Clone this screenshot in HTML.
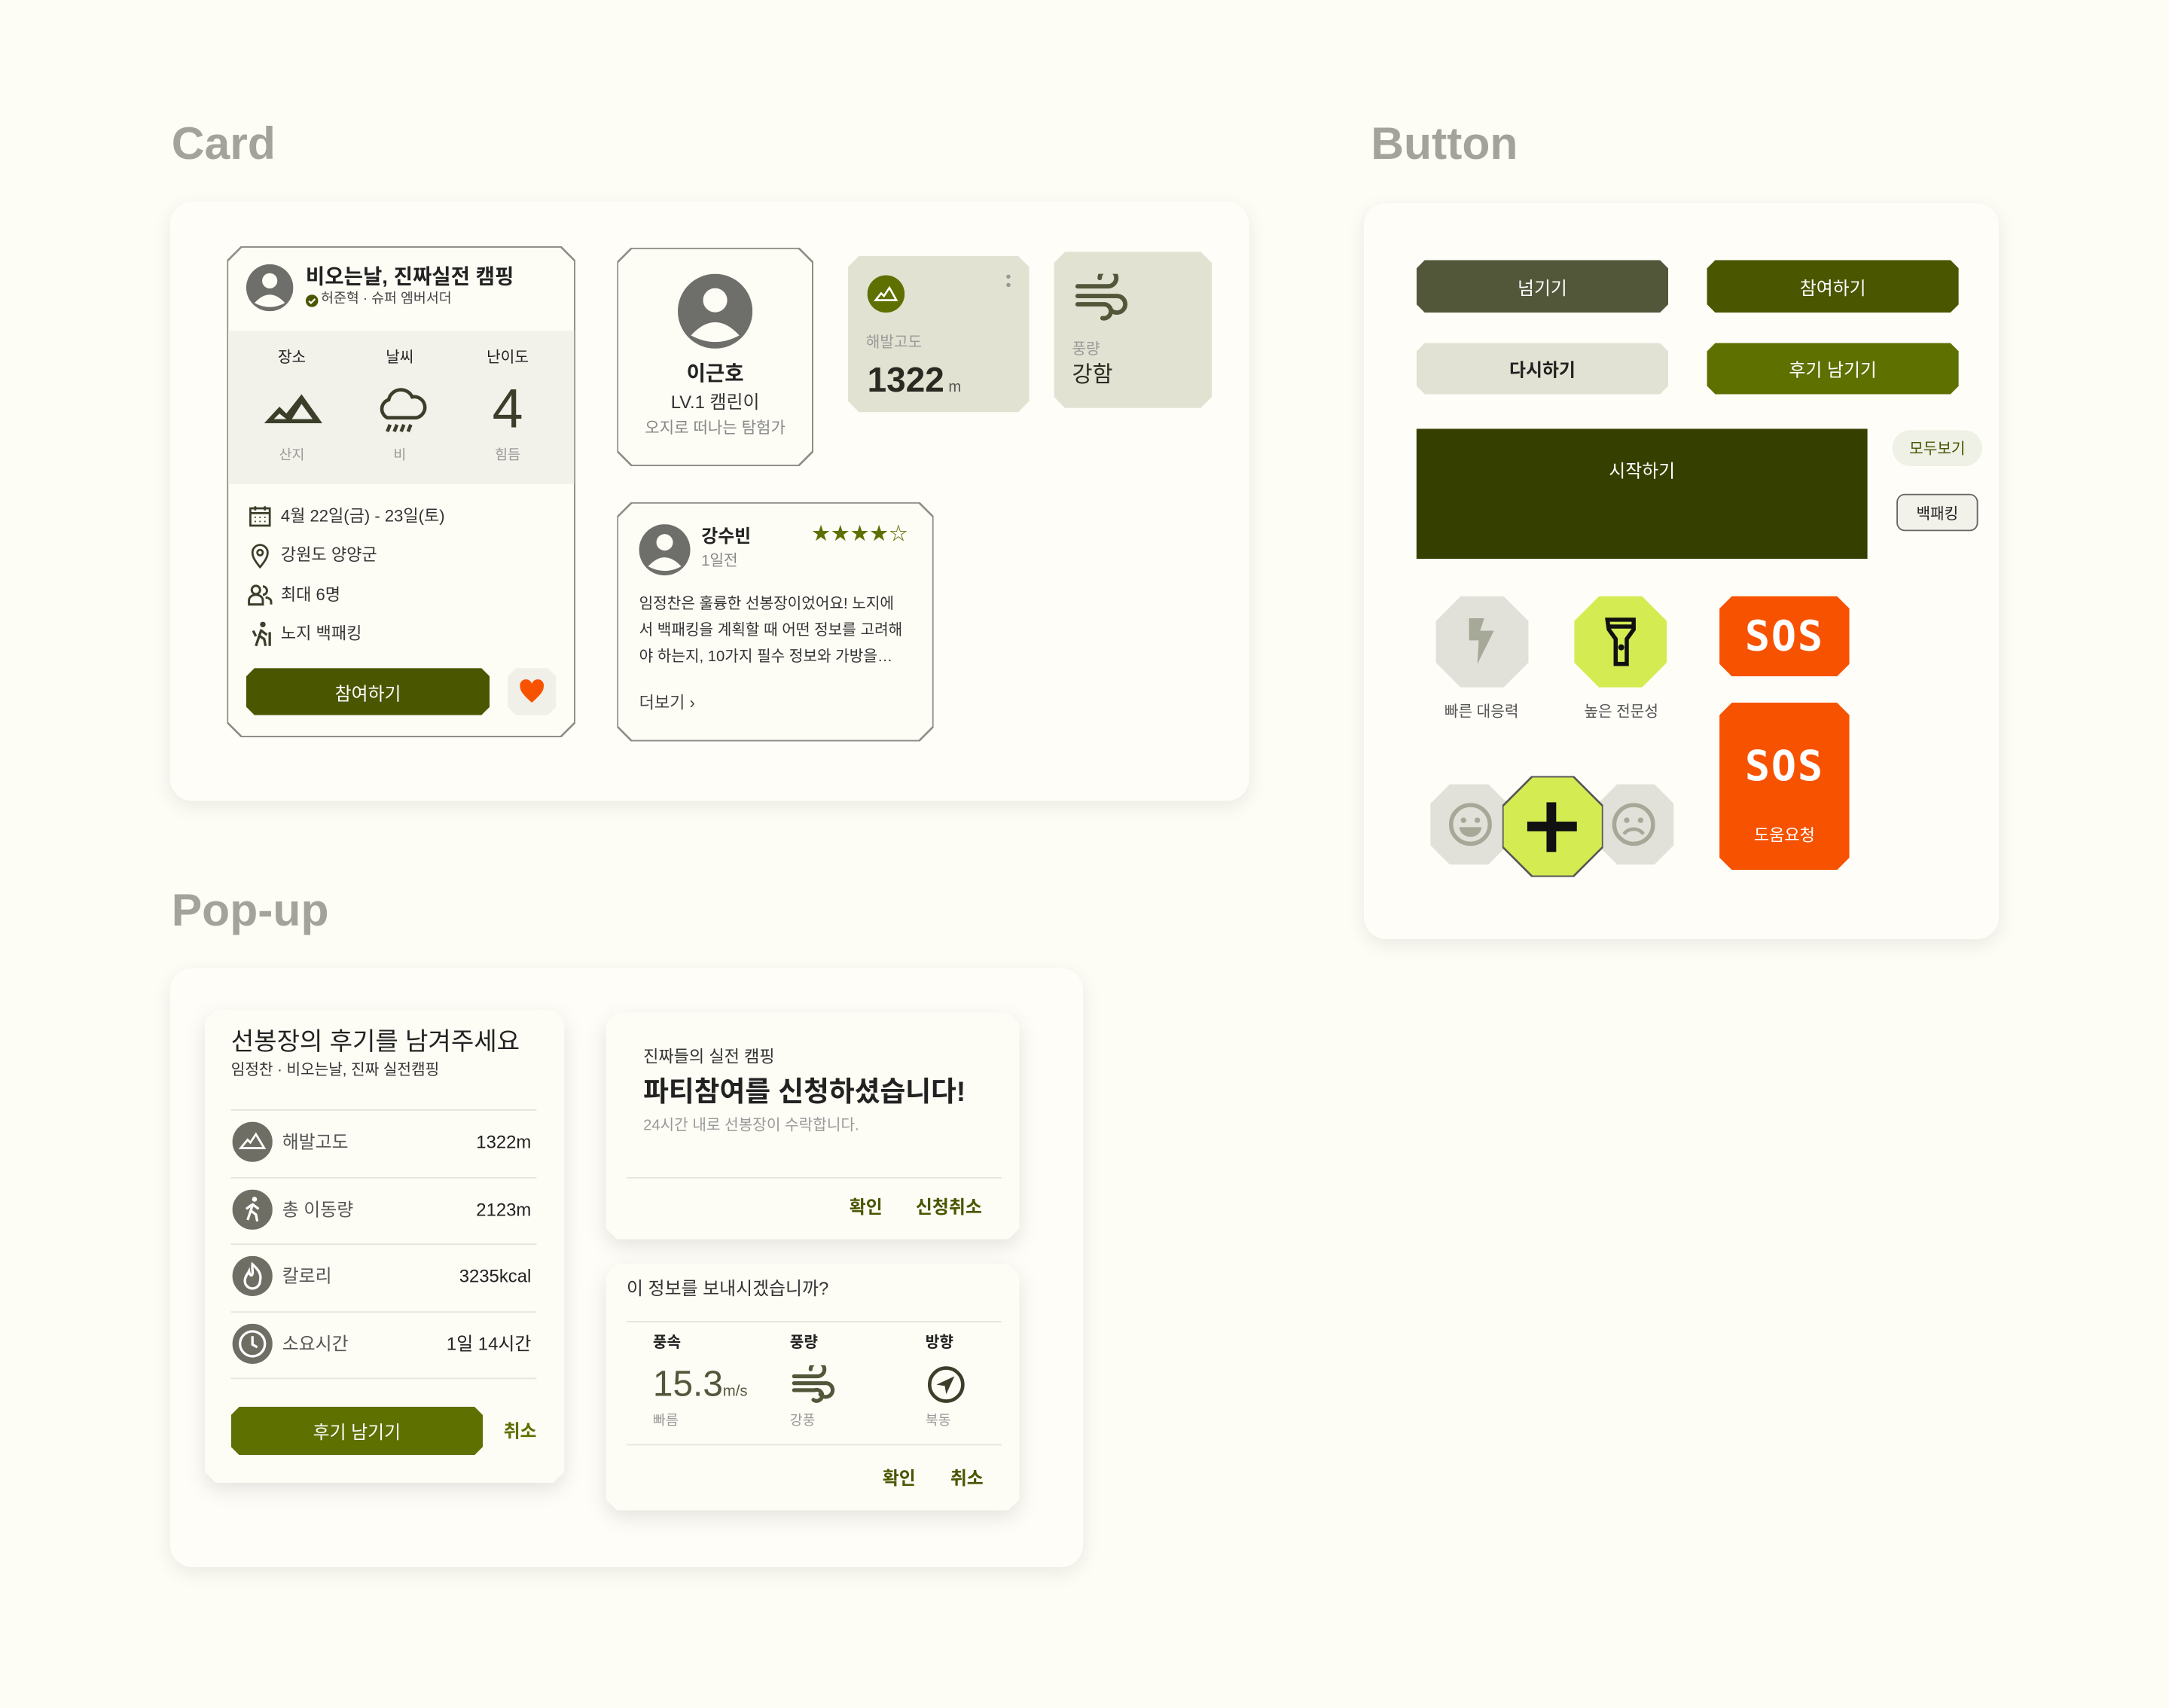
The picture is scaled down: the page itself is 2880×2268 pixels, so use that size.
<!DOCTYPE html>
<html><head><meta charset="utf-8"><style>
*{margin:0;padding:0;box-sizing:border-box}
html,body{width:2880px;height:2268px;background:#fdfcf5;overflow:hidden}
#w{position:absolute;left:0;top:0;width:1568px;height:1235px;transform:scale(1.83673);transform-origin:0 0;font-family:"Liberation Sans","Noto Sans CJK KR",sans-serif;color:#222}
.a{position:absolute}
.t{position:absolute;line-height:1;white-space:nowrap}
.o{position:absolute;--c:10px;clip-path:polygon(var(--c) 0,calc(100% - var(--c)) 0,100% var(--c),100% calc(100% - var(--c)),calc(100% - var(--c)) 100%,var(--c) 100%,0 calc(100% - var(--c)),0 var(--c))}
.o>.in{position:absolute;inset:1px;--c:10px;clip-path:inherit;background:#fdfcf5}
.panel{position:absolute;background:#fefdf8;border-radius:16px;box-shadow:0 4px 14px rgba(0,0,0,.08)}
.h{font-size:33px;font-weight:bold;color:#a3a39c}
.btn{display:flex;align-items:center;justify-content:center;color:#fff;font-size:13px}
.c{transform:translateX(-50%)}
.g{color:#4a5600;font-weight:bold}
.sh{position:absolute;left:0;top:0;filter:drop-shadow(0 5px 7px rgba(0,0,0,.1))}
</style></head><body><div id="w">
<div class="t h" style="left:124px;top:87px">Card</div>
<div class="t h" style="left:991px;top:87px">Button</div>
<div class="t h" style="left:124px;top:641px">Pop-up</div>

<div class="panel" style="left:123px;top:146px;width:780px;height:433px"></div>
<div class="panel" style="left:986px;top:147px;width:459px;height:532px"></div>
<div class="panel" style="left:123px;top:700px;width:660px;height:433px"></div>

<!-- Card 1 -->
<div class="o" style="left:164px;top:178px;width:252px;height:355px;background:#8d8d88"><div class="in"></div></div>
<div class="a" style="left:165px;top:239px;width:250px;height:111px;background:#f2f1ea"></div>
<svg class="a" style="left:178px;top:191px" width="34" height="34" viewBox="0 0 34 34"><circle cx="17" cy="17" r="17" fill="#6e6e6a"/><circle cx="17" cy="12" r="5.5" fill="#fdfcf5"/><path d="M6 28 Q17 16 28 28 Q17 34 6 28Z" fill="#fdfcf5"/></svg>
<div class="t" style="left:221px;top:193px;font-size:15px;font-weight:bold">비오는날, 진짜실전 캠핑</div>
<svg class="a" style="left:221px;top:213px" width="9" height="9"><circle cx="4.5" cy="4.5" r="4.5" fill="#4a5600"/><path d="M2.3 4.6l1.5 1.5 3-3" stroke="#fff" fill="none" stroke-width="1.2"/></svg>
<div class="t" style="left:232px;top:212px;font-size:10px;color:#444">허준혁 · 슈퍼 엠버서더</div>
<div class="t c" style="left:211px;top:254px;font-size:11px">장소</div>
<div class="t c" style="left:289px;top:254px;font-size:11px">날씨</div>
<div class="t c" style="left:367px;top:254px;font-size:11px">난이도</div>
<svg class="a" style="left:189px;top:282px" width="46" height="26"><path d="M2 24 L13 12 L18 17 L29 3 L44 24Z M9 21 L13 17 L18 21Z M22 21 L29 10 L37 21Z" fill="#3b3f2a" fill-rule="evenodd"/></svg>
<svg class="a" style="left:271px;top:278px" width="38" height="38" viewBox="0 0 38 38"><path d="M9 24 A7 7 0 0 1 10 11 A9 9 0 0 1 27 9 A7 7 0 0 1 30 24Z" fill="none" stroke="#3b3f2a" stroke-width="2.5"/><path d="M11 29 l-2 5 M16 29 l-2 5 M21 29 l-2 5 M26 29 l-2 5" stroke="#3b3f2a" stroke-width="2.5"/></svg>
<div class="t c" style="left:367px;top:276px;font-size:40px;color:#3b3f2a">4</div>
<div class="t c" style="left:211px;top:325px;font-size:10px;color:#999">산지</div>
<div class="t c" style="left:289px;top:325px;font-size:10px;color:#999">비</div>
<div class="t c" style="left:367px;top:325px;font-size:10px;color:#999">힘듬</div>
<svg class="a" style="left:180px;top:365px" width="16" height="16"><rect x="1" y="2.5" width="14" height="12.5" fill="none" stroke="#3b3f2a" stroke-width="1.5"/><path d="M1 6h14M4.5 1v3M11.5 1v3" stroke="#3b3f2a" stroke-width="1.5"/><path d="M4 9h1M7.5 9h1M11 9h1M4 12h1M7.5 12h1M11 12h1" stroke="#3b3f2a"/></svg>
<div class="t" style="left:203px;top:367px;font-size:12px;color:#333">4월 22일(금) - 23일(토)</div>
<svg class="a" style="left:181px;top:393px" width="14" height="18"><path d="M7 17 C2 11 1.5 8.5 1.5 6.5 A5.5 5.5 0 0 1 12.5 6.5 C12.5 8.5 12 11 7 17Z" fill="none" stroke="#3b3f2a" stroke-width="1.5"/><circle cx="7" cy="6.5" r="2" fill="none" stroke="#3b3f2a" stroke-width="1.5"/></svg>
<div class="t" style="left:203px;top:395px;font-size:12px;color:#333">강원도 양양군</div>
<svg class="a" style="left:179px;top:422px" width="18" height="16"><circle cx="6" cy="4.5" r="3" fill="none" stroke="#3b3f2a" stroke-width="1.6"/><path d="M1 15 V12 A5 4 0 0 1 11 12 V15Z" fill="none" stroke="#3b3f2a" stroke-width="1.6"/><path d="M11 2 A3 3 0 0 1 11 8 M13 10 A4 3 0 0 1 17 13 V15" fill="none" stroke="#3b3f2a" stroke-width="1.6"/></svg>
<div class="t" style="left:203px;top:424px;font-size:12px;color:#333">최대 6명</div>
<svg class="a" style="left:181px;top:449px" width="16" height="19"><circle cx="9" cy="2.5" r="2" fill="#3b3f2a"/><path d="M8 6 L6 12 L4 18 M7 11 L10 13 L11 18 M8 7 L12 10 M14 8 V18 M2 7 L4 11" stroke="#3b3f2a" stroke-width="1.8" fill="none"/></svg>
<div class="t" style="left:203px;top:452px;font-size:12px;color:#333">노지 백패킹</div>
<div class="o btn" style="left:178px;top:483px;width:176px;height:34px;background:#4a5600;--c:6px">참여하기</div>
<div class="o" style="left:367px;top:483px;width:35px;height:34px;background:#f0efe8;--c:6px"></div>
<svg class="a" style="left:375px;top:491px" width="19" height="18"><path d="M9.5 17 C4 12 1 9 1 5.5 A4.3 4.3 0 0 1 9.5 3.5 A4.3 4.3 0 0 1 18 5.5 C18 9 15 12 9.5 17Z" fill="#f75200"/></svg>

<!-- Card 2 -->
<div class="o" style="left:446px;top:179px;width:142px;height:158px;background:#8d8d88"><div class="in"></div></div>
<svg class="a" style="left:490px;top:198px" width="54" height="54" viewBox="0 0 34 34"><circle cx="17" cy="17" r="17" fill="#6e6e6a"/><circle cx="17" cy="12" r="5.5" fill="#fdfcf5"/><path d="M6 28 Q17 16 28 28 Q17 34 6 28Z" fill="#fdfcf5"/></svg>
<div class="t c" style="left:517px;top:263px;font-size:15px;font-weight:bold">이근호</div>
<div class="t c" style="left:517px;top:284px;font-size:13px;color:#333">LV.1 캠린이</div>
<div class="t c" style="left:517px;top:305px;font-size:11.5px;color:#888">오지로 떠나는 탐험가</div>

<!-- Card 3 -->
<div class="o" style="left:613px;top:185px;width:131px;height:113px;background:#e2e2d2;--c:8px"></div>
<svg class="a" style="left:627px;top:199px" width="27" height="27"><circle cx="13.5" cy="13.5" r="13.5" fill="#5e7000"/><path d="M6 18 L10 13 L12 15 L16 9 L21 18Z" fill="none" stroke="#fff" stroke-width="1.4"/></svg>
<svg class="a" style="left:727px;top:197px" width="4" height="12"><circle cx="2" cy="3" r="1.5" fill="#999"/><circle cx="2" cy="9" r="1.5" fill="#999"/></svg>
<div class="t" style="left:626px;top:243px;font-size:11px;color:#999">해발고도</div>
<div class="t" style="left:627px;top:263px;font-size:25px;font-weight:bold;color:#2a2a22">1322<span style="font-size:11px;font-weight:normal;color:#555"> m</span></div>

<!-- Card 4 -->
<div class="o" style="left:762px;top:182px;width:114px;height:113px;background:#e2e2d2;--c:8px"></div>
<svg class="a" style="left:777px;top:198px" width="40" height="36"><path d="M2 9 H24 A6 6 0 1 0 18 3 M2 16 H30 A6 6 0 1 1 26 26 M2 22 H22 A5 5 0 1 1 20 32" fill="none" stroke="#52573a" stroke-width="3.2" stroke-linecap="round"/></svg>
<div class="t" style="left:775px;top:248px;font-size:11px;color:#999">풍량</div>
<div class="t" style="left:775px;top:264px;font-size:16px;color:#2a2a22">강함</div>

<!-- Card 5 -->
<div class="o" style="left:446px;top:363px;width:229px;height:173px;background:#8d8d88"><div class="in"></div></div>
<svg class="a" style="left:462px;top:379px" width="37" height="37" viewBox="0 0 34 34"><circle cx="17" cy="17" r="17" fill="#6e6e6a"/><circle cx="17" cy="12" r="5.5" fill="#fdfcf5"/><path d="M6 28 Q17 16 28 28 Q17 34 6 28Z" fill="#fdfcf5"/></svg>
<div class="t" style="left:507px;top:381px;font-size:13px;font-weight:bold">강수빈</div>
<div class="t" style="left:507px;top:401px;font-size:11px;color:#888">1일전</div>
<div class="t" style="left:587px;top:379px;font-size:13px;color:#5e7000;letter-spacing:1px">★★★★☆</div>
<div class="a" style="left:462px;top:428px;width:205px;font-size:11px;line-height:19px;color:#333">임정찬은 훌륭한 선봉장이었어요! 노지에<br>서 백패킹을 계획할 때 어떤 정보를 고려해<br>야 하는지, 10가지 필수 정보와 가방을…</div>
<div class="t" style="left:462px;top:502px;font-size:12px;color:#444">더보기 ›</div>

<!-- Buttons -->
<div class="o btn" style="left:1024px;top:188px;width:182px;height:38px;background:#52573a;--c:6px">넘기기</div>
<div class="o btn" style="left:1234px;top:188px;width:182px;height:38px;background:#4a5600;--c:6px">참여하기</div>
<div class="o btn" style="left:1024px;top:248px;width:182px;height:37px;background:#e2e2d4;color:#222;font-weight:bold;--c:6px">다시하기</div>
<div class="o btn" style="left:1234px;top:248px;width:182px;height:37px;background:#5e7000;--c:6px">후기 남기기</div>
<div class="a" style="left:1024px;top:310px;width:326px;height:94px;background:#354000"></div>
<div class="t c" style="left:1187px;top:334px;font-size:13px;color:#fff">시작하기</div>
<div class="a btn" style="left:1368px;top:311px;width:65px;height:26px;border-radius:13px;background:#eff0e6;color:#4a5600;font-size:11px">모두보기</div>
<div class="a btn" style="left:1371px;top:357px;width:59px;height:27px;border-radius:6px;background:#f2f1ea;border:1px solid #666;color:#222;font-size:11px">백패킹</div>
<div class="o" style="left:1038px;top:431px;width:67px;height:66px;background:#e2e1d9;--c:18px"></div>
<svg class="a" style="left:1061px;top:447px" width="20" height="34"><path d="M1 0 H12 L9 9 H19 L7 33 L8 16 H1Z" fill="#a6a898"/></svg>
<div class="o" style="left:1138px;top:431px;width:67px;height:66px;background:#d4ec52;--c:18px"></div>
<svg class="a" style="left:1160px;top:446px" width="24" height="36"><path d="M2 2 H21 V9 L16 16 V34 H8 V16 L3 9Z M3 7 H20" fill="none" stroke="#111" stroke-width="3"/><circle cx="12" cy="22" r="2.2" fill="#111"/></svg>
<div class="t c" style="left:1071px;top:510px;font-size:11px;color:#555">빠른 대응력</div>
<div class="t c" style="left:1172px;top:510px;font-size:11px;color:#555">높은 전문성</div>
<div class="o btn" style="left:1243px;top:431px;width:94px;height:58px;background:#f75200;--c:9px;font-size:30px;font-weight:bold;font-family:'DejaVu Sans Mono',monospace;letter-spacing:1px">SOS</div>
<div class="o" style="left:1243px;top:508px;width:94px;height:121px;background:#f75200;--c:9px"></div>
<div class="t c" style="left:1290px;top:540px;font-size:30px;font-weight:bold;color:#fff;font-family:'DejaVu Sans Mono',monospace;letter-spacing:1px">SOS</div>
<div class="t c" style="left:1290px;top:598px;font-size:12px;color:#fff">도움요청</div>
<div class="o" style="left:1034px;top:567px;width:56px;height:58px;background:#e2e1d9;--c:14px"></div>
<div class="o" style="left:1155px;top:567px;width:55px;height:58px;background:#e2e1d9;--c:14px"></div>
<svg class="a" style="left:1047px;top:580px" width="32" height="32"><circle cx="16" cy="16" r="14" fill="none" stroke="#a6a898" stroke-width="3"/><circle cx="11" cy="13" r="2" fill="#a6a898"/><circle cx="21" cy="13" r="2" fill="#a6a898"/><path d="M8 18 H24 A8 7 0 0 1 8 18Z" fill="#a6a898"/></svg>
<svg class="a" style="left:1165px;top:580px" width="32" height="32"><circle cx="16" cy="16" r="14" fill="none" stroke="#a6a898" stroke-width="3"/><circle cx="11" cy="13" r="2" fill="#a6a898"/><circle cx="21" cy="13" r="2" fill="#a6a898"/><path d="M9 23 A8 7 0 0 1 23 23" fill="none" stroke="#a6a898" stroke-width="2.5"/></svg>
<div class="o" style="left:1086px;top:561px;width:73px;height:73px;background:#555;--c:21px"><div class="in" style="--c:21px;background:#d4ec52"></div></div>
<svg class="a" style="left:1104px;top:580px" width="36" height="36"><path d="M14 0h7v36h-7z M0 14h36v7H0z" fill="#111"/></svg>

<!-- Popup shadows -->
<div class="sh">
<div class="o" style="left:148px;top:730px;width:260px;height:342px;background:#fdfcf5;--c:8px"></div>
<div class="o" style="left:438px;top:732px;width:299px;height:164px;background:#fdfcf5;--c:8px"></div>
<div class="o" style="left:438px;top:914px;width:299px;height:178px;background:#fdfcf5;--c:8px"></div>
</div>

<!-- Popup 1 -->
<div class="t" style="left:167px;top:744px;font-size:18px">선봉장의 후기를 남겨주세요</div>
<div class="t" style="left:167px;top:769px;font-size:11px;color:#333">임정찬 · 비오는날, 진짜 실전캠핑</div>
<div class="a" style="left:167px;top:802px;width:221px;border-top:1px solid #e6e5dd"></div>
<div class="a" style="left:167px;top:851px;width:221px;border-top:1px solid #e6e5dd"></div>
<div class="a" style="left:167px;top:899px;width:221px;border-top:1px solid #e6e5dd"></div>
<div class="a" style="left:167px;top:948px;width:221px;border-top:1px solid #e6e5dd"></div>
<div class="a" style="left:167px;top:996px;width:221px;border-top:1px solid #e6e5dd"></div>
<svg class="a" style="left:168px;top:811px" width="29" height="29"><circle cx="14.5" cy="14.5" r="14.5" fill="#6e6e64"/><path d="M6 19 L11 13 L13 15 L17 9 L23 19Z" fill="none" stroke="#fff" stroke-width="1.5"/></svg>
<svg class="a" style="left:168px;top:860px" width="29" height="29"><circle cx="14.5" cy="14.5" r="14.5" fill="#6e6e64"/><circle cx="16" cy="7" r="1.8" fill="#fff"/><path d="M15 10 L13 16 L11 22 M13 15 L17 18 L18 23 M15 11 L19 14 M14 11 L10 14" stroke="#fff" stroke-width="1.8" fill="none"/></svg>
<svg class="a" style="left:168px;top:908px" width="29" height="29"><circle cx="14.5" cy="14.5" r="14.5" fill="#6e6e64"/><path d="M14.5 6 C20 11 21 14 20 18 A5.5 5.5 0 0 1 9 18 C9 15 11 13 12 11 C12.5 14 14 15 14.5 13 C15 11 14 9 14.5 6Z" fill="none" stroke="#fff" stroke-width="1.8"/></svg>
<svg class="a" style="left:168px;top:957px" width="29" height="29"><circle cx="14.5" cy="14.5" r="14.5" fill="#6e6e64"/><circle cx="14.5" cy="14.5" r="9" fill="none" stroke="#fff" stroke-width="1.8"/><path d="M14.5 9 V15 L18 17" fill="none" stroke="#fff" stroke-width="1.8"/></svg>
<div class="t" style="left:204px;top:819px;font-size:13px;color:#555">해발고도</div>
<div class="t" style="left:204px;top:868px;font-size:13px;color:#555">총 이동량</div>
<div class="t" style="left:204px;top:916px;font-size:13px;color:#555">칼로리</div>
<div class="t" style="left:204px;top:965px;font-size:13px;color:#555">소요시간</div>
<div class="t" style="right:1184px;top:819px;font-size:13px">1322m</div>
<div class="t" style="right:1184px;top:868px;font-size:13px">2123m</div>
<div class="t" style="right:1184px;top:916px;font-size:13px">3235kcal</div>
<div class="t" style="right:1184px;top:965px;font-size:13px">1일 14시간</div>
<div class="o btn" style="left:167px;top:1017px;width:182px;height:35px;background:#5e7000;--c:6px">후기 남기기</div>
<div class="t g" style="left:364px;top:1028px;font-size:13px;color:#5e7000">취소</div>

<!-- Popup 2 -->
<div class="t" style="left:465px;top:758px;font-size:12px;color:#333">진짜들의 실전 캠핑</div>
<div class="t" style="left:465px;top:780px;font-size:20px;font-weight:bold">파티참여를 신청하셨습니다!</div>
<div class="t" style="left:465px;top:809px;font-size:11px;color:#999">24시간 내로 선봉장이 수락합니다.</div>
<div class="a" style="left:453px;top:851px;width:271px;border-top:1px solid #e6e5dd"></div>
<div class="t g" style="left:614px;top:866px;font-size:13px">확인</div>
<div class="t g" style="left:662px;top:866px;font-size:13px">신청취소</div>

<!-- Popup 3 -->
<div class="t" style="left:453px;top:925px;font-size:13px;color:#333">이 정보를 보내시겠습니까?</div>
<div class="a" style="left:453px;top:955px;width:271px;border-top:1px solid #e6e5dd"></div>
<div class="a" style="left:453px;top:1044px;width:271px;border-top:1px solid #e6e5dd"></div>
<div class="t" style="left:472px;top:966px;font-size:11px;font-weight:bold">풍속</div>
<div class="t" style="left:571px;top:966px;font-size:11px;font-weight:bold">풍량</div>
<div class="t" style="left:669px;top:966px;font-size:11px;font-weight:bold">방향</div>
<div class="t" style="left:472px;top:987px;font-size:26px;color:#52573a">15.3<span style="font-size:11px">m/s</span></div>
<svg class="a" style="left:572px;top:987px" width="32" height="28"><path d="M2 8 H19 A5 5 0 1 0 14 3 M2 13 H24 A5 5 0 1 1 21 21 M2 18 H17 A4 4 0 1 1 16 25" fill="none" stroke="#52573a" stroke-width="2.8" stroke-linecap="round"/></svg>
<svg class="a" style="left:670px;top:987px" width="28" height="28"><circle cx="14" cy="14" r="12" fill="none" stroke="#3b3f2a" stroke-width="2.5"/><path d="M20 8 L14 21 L13 15 L7 14Z" fill="#3b3f2a"/></svg>
<div class="t" style="left:472px;top:1023px;font-size:10px;color:#999">빠름</div>
<div class="t" style="left:571px;top:1023px;font-size:10px;color:#999">강풍</div>
<div class="t" style="left:669px;top:1023px;font-size:10px;color:#999">북동</div>
<div class="t g" style="left:638px;top:1062px;font-size:13px">확인</div>
<div class="t g" style="left:687px;top:1062px;font-size:13px">취소</div>
</div></body></html>
